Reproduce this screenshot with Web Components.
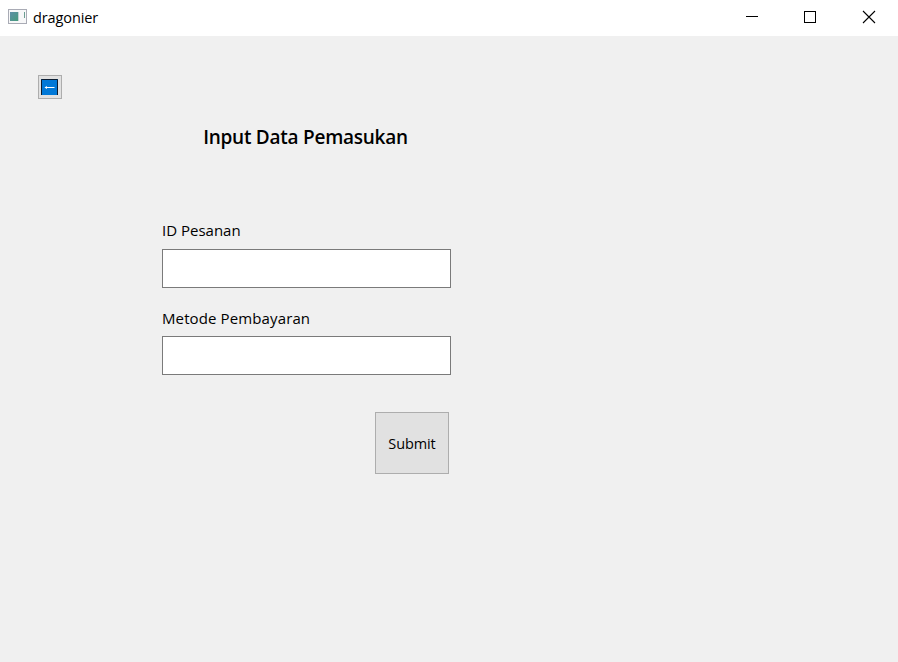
<!DOCTYPE html>
<html lang="id">
<head>
<meta charset="utf-8">
<title>dragonier</title>
<style>
html,body{margin:0;height:100%;overflow:hidden;background:#f0f0f0}
body{font-family:"Open Sans","Noto Sans",sans-serif;color:#000}
</style>
</head>
<body>
<app-window></app-window>
<script>
function define(name, html) {
  const t = document.createElement('template');
  t.innerHTML = html;
  customElements.define(name, class extends HTMLElement {
    constructor() {
      super();
      this.attachShadow({mode: 'open'}).append(t.content.cloneNode(true));
    }
  });
}

define('title-bar', `
<style>
:host{display:flex;align-items:center;height:36px;background:#fff;box-sizing:border-box;padding-left:8px}
.name{font-size:14.5px;line-height:20px;margin-left:6px;letter-spacing:-.1px;flex:1;white-space:nowrap}
.app{display:block;margin-top:-2px}
.controls{display:flex;height:36px}
.controls svg{display:block}
</style>
<svg class="app" width="19" height="16" viewBox="0 0 19 16">
  <defs><linearGradient id="g" x1="0" y1="0" x2="1" y2="1"><stop offset="0" stop-color="#5f8fa8"/><stop offset="1" stop-color="#479b7c"/></linearGradient></defs>
  <rect x=".5" y=".5" width="18" height="14" fill="#f7f7f8" stroke="#a9abb5"/>
  <rect x="2" y="3" width="8" height="9" fill="url(#g)"/>
  <rect x="10" y="3" width="1" height="9" fill="#c5d2d5"/>
  <rect x="16" y="3" width="1" height="6" fill="#6b9d91"/>
</svg>
<span class="name"><slot></slot></span>
<div class="controls">
  <svg width="58" height="36"><path d="M23 16.5h12" stroke="#000"/></svg>
  <svg width="58" height="36"><rect x="23.5" y="11.5" width="11" height="11" fill="none" stroke="#000"/></svg>
  <svg width="59" height="36"><path d="M24 11l12 12M36 11l-12 12" stroke="#000" stroke-width="1.1"/></svg>
</div>`);

define('back-button', `
<style>
:host{display:block;width:24px;height:24px}
button{display:grid;place-items:center;width:24px;height:24px;padding:0;margin:0;background:#e1e1e1;border:1px solid #adadad;border-radius:0}
svg{display:block}
</style>
<button aria-label="Kembali"><svg width="18" height="18" viewBox="0 0 18 18">
  <rect x="0" y="1" width="17" height="16" fill="#0078d7"/>
  <path d="M.5 17V1.5H16.5V17" fill="none" stroke="#0b1c30"/>
  <path d="M4.5 9.5H13.5" stroke="#fff"/>
  <path d="M3.5 9.5L6 8v3z" fill="#fff"/>
</svg></button>`);

define('form-title', `
<style>
:host{display:block;text-align:center;padding-right:2px;font-size:19px;line-height:26px;font-weight:600;letter-spacing:-.25px;white-space:nowrap}
</style><slot></slot>`);

define('text-field', `
<style>
:host{display:block}
label{display:block;font-size:15px;line-height:20px;height:20px;white-space:nowrap;letter-spacing:var(--track,0)}
input{display:block;box-sizing:border-box;width:289px;height:39px;margin:var(--gap,8px) 0 0;padding:0 8px;border:1px solid #7a7a7a;border-radius:0;background:#fff;font:inherit;outline:none}
</style>
<label><slot></slot></label><input type="text">`);

define('submit-button', `
<style>
:host{display:block}
button{display:block;width:74px;height:62px;padding:2px 0 0;background:#e1e1e1;border:1px solid #adadad;border-radius:0;font:14.5px/20px "Open Sans","Noto Sans",sans-serif;letter-spacing:-.1px;color:#000}
</style><button><slot></slot></button>`);

define('app-window', `
<style>
:host{display:flex;flex-direction:column;width:898px;height:662px;background:#f0f0f0}
main{flex:1;padding:39px 0 0 38px}
.form{display:flex;flex-direction:column;width:289px;margin:25px 0 0 124px}
.first{margin-top:70px;--gap:9px}
.second{margin-top:20px;--track:.12px}
submit-button{align-self:flex-end;margin:37px 2px 0 0}
</style>
<title-bar>dragonier</title-bar>
<main>
  <back-button></back-button>
  <div class="form">
    <form-title>Input Data Pemasukan</form-title>
    <text-field class="first">ID Pesanan</text-field>
    <text-field class="second">Metode Pembayaran</text-field>
    <submit-button>Submit</submit-button>
  </div>
</main>`);
</script>
</body>
</html>
